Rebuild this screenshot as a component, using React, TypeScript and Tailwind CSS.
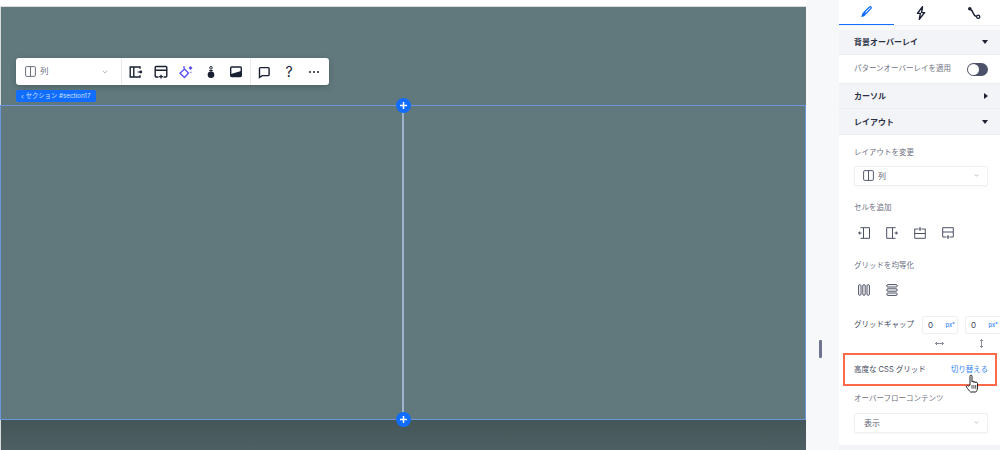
const font = { fontFamily: '"Inter","Noto Sans CJK JP",sans-serif' };

function Ico({ children, className = "", w = 16, h = 16 }: any) {
  return (
    <svg width={w} height={h} viewBox={`0 0 ${w} ${h}`} fill="none" stroke="currentColor" strokeWidth="1.300" className={className}>
      {children}
    </svg>
  );
}

function ColsIcon({ className = "" }: any) {
  return (
    <Ico w={11} h={11} className={className}>
      <rect x="0.6" y="0.6" width="9.8" height="9.8" rx="1.2" strokeWidth="1" />
      <path d="M5.5 .6v9.8" strokeWidth="1" />
    </Ico>
  );
}

function Chevron({ className = "" }: any) {
  return (
    <svg viewBox="0 0 6 4" fill="none" stroke="currentColor" strokeWidth="0.8" className={className}>
      <path d="M.7.7 3 3 5.300.7" />
    </svg>
  );
}

function Toolbar() {
  return (
    <div className="flex h-[27px] w-[313px] items-center rounded-[3px] bg-white shadow-[0_2px_6px_rgba(0,0,0,0.2)]">
      <div className="flex h-full w-[106px] items-center border-r border-[#e8eaf0] pl-[9px] pr-[13px] text-[#6a6f7d]">
        <ColsIcon />
        <span className="ml-[4px] text-[8.500px]">列</span>
        <Chevron className="ml-auto h-[4px] w-[6px] text-[#a5a9b5]" />
      </div>
      <div className="flex h-full w-[129px] items-center gap-[11px] border-r border-[#e8eaf0] pl-[7px] text-[#1a2033]">
        <Ico w={14} h={14} className="shrink-0">
          <path d="M11 3.800V2H1.200v10H11v-1.800M4.800 2v10" strokeWidth="1.400" />
          <path d="M8.500 7H12" strokeWidth="1" />
          <circle cx="11.800" cy="7" r="1.400" fill="currentColor" stroke="none" />
        </Ico>
        <Ico w={14} h={14} className="shrink-0">
          <path d="M4.500 12H2.200a1 1 0 0 1-1-1V2.500a1 1 0 0 1 1-1h9.600a1 1 0 0 1 1 1V11a1 1 0 0 1-1 1H9.500M1.200 5.200h11.600" strokeWidth="1.400" />
          <path d="M7 9.800v3.800M5.100 11.700h3.800" strokeWidth="1.300" />
        </Ico>
        <Ico w={14} h={14} className="shrink-0 text-[#5b4ff0]">
          <path d="M5.500 4 9.500 8 5.500 12.500 1 8.200z" strokeWidth="1.400" />
          <path d="M11.500 1 13.500 3 11.500 5 9.500 3z" fill="currentColor" stroke="none" />
          <path d="M3.800 2.300 5 1l1.200 1.300L5 3.500z" fill="currentColor" stroke="none" />
          <path d="M11.200 7.200 12 6.400l.8.800-.8.800z" fill="currentColor" stroke="none" />
        </Ico>
        <Ico w={14} h={14} className="shrink-0">
          <circle cx="7" cy="9.800" r="3.300" fill="currentColor" stroke="none" />
          <path d="M3.600 9.500 7 6l3.400 3.500z" fill="currentColor" stroke="none" />
          <circle cx="7" cy="2.800" r="1.300" strokeWidth="1" />
          <path d="M5.200 5.500h3.600" strokeWidth="1" />
        </Ico>
        <Ico w={14} h={14} className="shrink-0">
          <rect x="1.700" y="2" width="10.600" height="9.600" rx="1" strokeWidth="1.400" />
          <path d="M2 11.500V9L12 6v5.500z" fill="currentColor" stroke="none" />
        </Ico>
      </div>
      <div className="flex h-full items-center gap-[11px] pl-[6px] text-[#1a2033]">
        <Ico w={14} h={14} className="shrink-0">
          <path d="M2.500 3.400a.8.8 0 0 1 .8-.8h8a.8.8 0 0 1 .8.800v6.400a.8.8 0 0 1-.8.800H5.300l-2.800 1.800z" strokeWidth="1.400" />
        </Ico>
        <span className="w-[14px] text-center text-[14px] font-normal leading-none">?</span>
        <Ico w={14} h={14} className="shrink-0">
          <circle cx="3" cy="7" r="1" fill="currentColor" stroke="none" />
          <circle cx="7" cy="7" r="1" fill="currentColor" stroke="none" />
          <circle cx="11" cy="7" r="1" fill="currentColor" stroke="none" />
        </Ico>
      </div>
    </div>
  );
}

function PlusDot() {
  return (
    <span className="flex h-[15px] w-[15px] items-center justify-center rounded-full bg-[#116dff]">
      <svg width="7" height="7" viewBox="0 0 7 7" stroke="white" strokeWidth="1.500"><path d="M3.500 0v7M0 3.500h7" /></svg>
    </span>
  );
}

function Header({ title, arrow, tall }: { title: string; arrow: "down" | "right"; tall?: boolean }) {
  return (
    <div className={`flex shrink-0 items-center justify-between border-b border-[#eceef3] bg-[#f3f4f8] pl-[15px] pr-[12px] ${tall ? "h-[26px]" : "h-[25px]"}`}>
      <span className="text-[8px] font-bold text-[#2b3045]">{title}</span>
      {arrow === "down" ? (
        <span className="h-0 w-0 border-x-[3px] border-t-[4px] border-x-transparent border-t-[#1d2235]" />
      ) : (
        <span className="h-0 w-0 border-y-[3px] border-l-[4px] border-y-transparent border-l-[#1d2235]" />
      )}
    </div>
  );
}

function Label({ children, className = "" }: any) {
  return <div className={`text-[7.500px] leading-[12px] text-[#6d7183] ${className}`}>{children}</div>;
}

function Select({ children }: any) {
  return (
    <div className="flex h-[20px] w-[134px] items-center rounded-[2px] border border-[#eef0f4] bg-white px-[8px] pb-[1px] text-[8px] text-[#5f6475] shadow-[0_1px_2px_rgba(0,0,0,0.03)]">
      {children}
      <Chevron className="ml-auto h-[3px] w-[5px] text-[#8d91a0]" />
    </div>
  );
}

function Gap() {
  return (
    <div className="flex h-[18px] w-[36px] shrink-0 items-center rounded-[2px] border border-[#eef0f4] pl-[5px] pr-[2px]">
      <span className="text-[8px] text-[#3b4054]">0</span>
      <span className="ml-auto text-[5.500px] font-semibold text-[#4a8cf7]">px*</span>
    </div>
  );
}

export default function App() {
  return (
    <div className="flex h-[450px] w-[1000px] overflow-hidden bg-white" style={font}>
      <div className="flex w-[806px] shrink-0 flex-col">
        <div className="h-[7px] shrink-0 border-b border-[#dcdcdc] bg-white" />
        <div className="flex min-h-0 flex-1 flex-col border-l border-[#d8dcdc] bg-[#61797d]">
          <div className="flex h-[98px] shrink-0 flex-col pl-[15px] pt-[51px]">
            <Toolbar />
            <div className="mt-[5px] flex h-[12px] w-[80px] items-center gap-[2px] rounded-[2px] bg-[#116dff] pl-[5px] pt-px text-[6.300px] text-[#cfe0ff]">
              <span className="text-[7px] leading-none">‹</span>
              <span>セクション #section17</span>
            </div>
          </div>
          <div className="relative -ml-px grid h-[315px] shrink-0 grid-cols-2 border border-[#6a96dc]">
            <div className="-mr-px border-r-2 border-[#9db4cc]" />
            <div />
            <span className="absolute left-[395px] top-[-8px]"><PlusDot /></span>
            <span className="absolute bottom-[-8px] left-[395px]"><PlusDot /></span>
          </div>
          <div className="min-h-0 flex-1 bg-gradient-to-b from-[#455659] to-[#4d5f62]" />
        </div>
      </div>

      <div className="flex w-[33px] shrink-0 items-center justify-center bg-[#f7f8fa] pr-[4px] pt-[248px]">
        <div className="h-[18px] w-[3px] rounded-[1px] bg-[#70748f]" />
      </div>

      <div className="flex min-w-0 flex-1 flex-col bg-white">
        <div className="flex h-[26px] shrink-0 items-center border-b border-[#f0f1f5]">
          <div className="flex h-full w-[55px] items-center justify-center border-b-[1.500px] border-[#116dff] pr-[1px] text-[#116dff]">
            <Ico w={14} h={14}>
              <path d="M5.200 7.300 10.500 2c.9-.9 2.400.4 1.500 1.400L7 8.700z" strokeWidth="1.300" />
              <path d="M5.200 7.300c-1.700.2-2 1.500-2.400 3-.2.600-.5.900-.9 1.200 2.300.6 4.500-.2 5-2.700z" fill="currentColor" stroke="none" />
            </Ico>
          </div>
          <div className="flex h-full w-[53px] items-center justify-center text-[#1a2033]">
            <Ico w={14} h={14}>
              <path d="M8.500.8 3.400 7.400h3L5.300 13.200l5.300-6.600H7.600z" strokeWidth="1.400" strokeLinejoin="round" />
            </Ico>
          </div>
          <div className="flex h-full w-[53px] items-center justify-center text-[#1a2033]">
            <Ico w={14} h={14}>
              <circle cx="2.800" cy="2.800" r="1.800" fill="currentColor" stroke="none" />
              <circle cx="11.200" cy="10.800" r="1.600" />
              <path d="M3.500 3.500c3.500 1.500 1.800 6 6 7" strokeWidth="1.500" />
            </Ico>
          </div>
        </div>
        <div className="h-[4px] shrink-0 bg-[#fafafb]" />
        <Header title="背景オーバーレイ" arrow="down" />
        <div className="flex h-[29px] shrink-0 items-center justify-between border-b border-[#eceef3] pl-[15px] pr-[12px]">
          <Label>パターンオーバーレイを適用</Label>
          <div className="flex h-[13px] w-[21px] items-center rounded-full bg-[#4d5268] pl-[1px]">
            <span className="h-[11px] w-[11px] rounded-full bg-white" />
          </div>
        </div>
        <Header title="カーソル" arrow="right" />
        <Header title="レイアウト" arrow="down" tall />
        <div className="flex flex-col pl-[15px] pt-[12px]">
          <Label>レイアウトを変更</Label>
          <div className="mt-[7px]">
            <Select>
              <ColsIcon className="text-[#555a6b]" />
              <span className="ml-[4px]">列</span>
            </Select>
          </div>
          <Label className="mt-[16px]">セルを追加</Label>
          <div className="ml-[4px] mt-[13px] flex gap-[16px] text-[#4c5164]">
            <Ico w={12} h={12} className="shrink-0">
              <path d="M2.500.7h9v10.600h-9M5.500.7v10.600M0 6h3.500M1.700 4.500v3" strokeWidth="1" />
            </Ico>
            <Ico w={12} h={12} className="shrink-0">
              <path d="M9.500 .7H.7v10.600h8.800M6.500 .7v10.600M8.500 6H12M10.300 4.500v3" strokeWidth="1" />
            </Ico>
            <Ico w={12} h={12} className="shrink-0">
              <path d="M4 2H.7v9.300h10.600V2H8M.7 6.500h10.600M6 0v4M4.500 2h3" strokeWidth="1" />
            </Ico>
            <Ico w={12} h={12} className="shrink-0">
              <path d="M4 10H.7V.7h10.600V10H8M.7 5h10.600M6 8v4M4.500 10h3" strokeWidth="1" />
            </Ico>
          </div>
          <Label className="mt-[21px]">グリッドを均等化</Label>
          <div className="ml-[4px] mt-[12px] flex gap-[16px] text-[#4c5164]">
            <Ico w={12} h={12} className="shrink-0">
              <rect x=".6" y=".7" width="2.400" height="10.600" rx="1.200" strokeWidth="1" />
              <rect x="4.800" y=".7" width="2.400" height="10.600" rx="1.200" strokeWidth="1" />
              <rect x="9" y=".7" width="2.400" height="10.600" rx="1.200" strokeWidth="1" />
            </Ico>
            <Ico w={12} h={12} className="shrink-0">
              <rect x=".7" y=".6" width="10.600" height="2.400" rx="1.200" strokeWidth="1" />
              <rect x=".7" y="4.800" width="10.600" height="2.400" rx="1.200" strokeWidth="1" />
              <rect x=".7" y="9" width="10.600" height="2.400" rx="1.200" strokeWidth="1" />
            </Ico>
          </div>
          <div className="mt-[20px] flex items-center">
            <Label className="w-[68px] shrink-0 text-[#43485b]">グリッドギャップ</Label>
            <Gap />
            <span className="ml-[7px]"><Gap /></span>
          </div>
          <div className="mt-[4px] flex h-[11px] items-center pl-[81px] text-[#6a6f82]">
            <svg width="9" height="5" viewBox="0 0 9 5" fill="none" stroke="currentColor" strokeWidth=".8"><path d="M.5 2.500h8M2 1 .5 2.500 2 4M7 1l1.500 1.500L7 4" /></svg>
            <svg width="5" height="9" viewBox="0 0 5 9" fill="none" stroke="currentColor" strokeWidth=".8" className="ml-[35px]"><path d="M2.500.5v8M1 2 2.500.5 4 2M1 7l1.500 1.500L4 7" /></svg>
          </div>
        </div>
        <div className="relative ml-[4px] mt-[4px] flex h-[33px] w-[154px] shrink-0 items-center justify-between border-[2px] border-[#fb6a4a] pl-[9px] pr-[7px]">
          <span className="text-[7.500px] text-[#43485b]">高度な CSS グリッド</span>
          <span className="text-[7.500px] text-[#3d87f5]">切り替える</span>
          <svg width="16" height="19" viewBox="0 0 16 19" className="absolute left-[120px] top-[19px]">
            <path d="M5 11V2.200c0-1.500 2-1.500 2 0V8c0-1.100 1.900-1.100 1.900 0v.5c0-1.100 1.800-1.100 1.800 0V9c0-1.100 1.800-.9 1.800.3v4.500c0 2-.9 3.600-1.700 4.200H5.500c-1.100-.9-2.800-3.200-3.900-4.800-.9-1.500.9-2.200 1.900-1.100z" fill="white" stroke="#222" strokeWidth="1" />
            <path d="M7 11v3.700M8.900 11v3.700M10.700 11v3.700" stroke="#222" strokeWidth=".8" />
          </svg>
        </div>
        <div className="flex flex-col pl-[15px] pt-[7px]">
          <Label>オーバーフローコンテンツ</Label>
          <div className="mt-[8px]">
            <Select><span className="ml-px">表示</span></Select>
          </div>
        </div>
        <div className="mt-[12px] flex-1 bg-[#f3f4f8]" />
      </div>
    </div>
  );
}
